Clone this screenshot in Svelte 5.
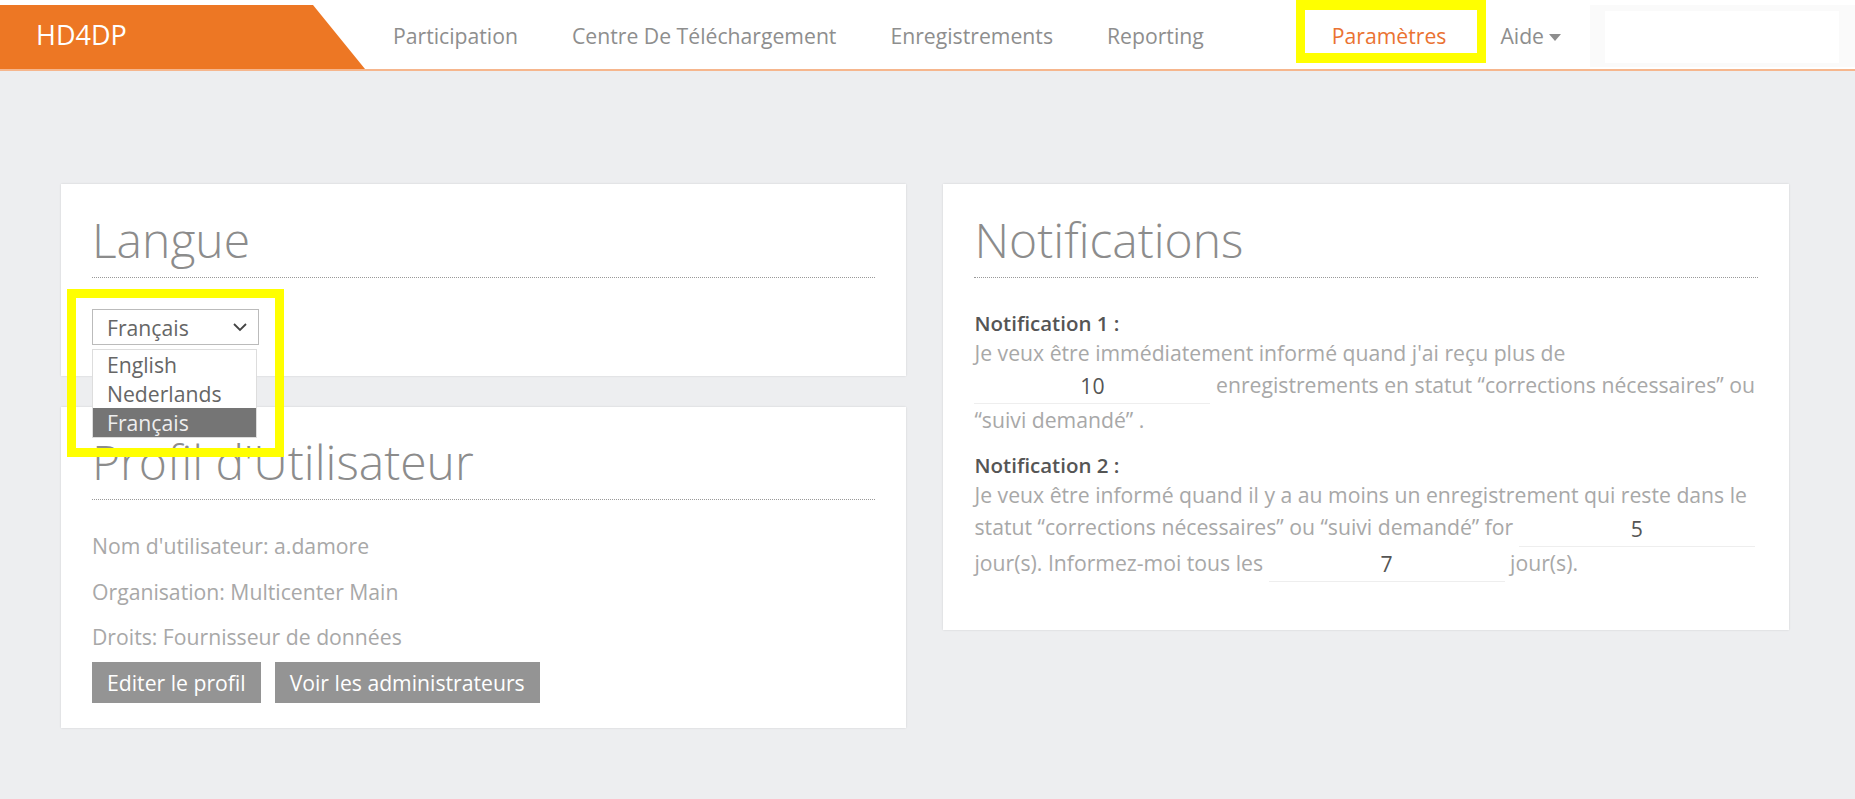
<script>
	const navLinks = ['Participation', 'Centre De Téléchargement', 'Enregistrements', 'Reporting'];
	const languages = ['English', 'Nederlands', 'Français'];
	const profile = [
		"Nom d'utilisateur: a.damore",
		'Organisation: Multicenter Main',
		'Droits: Fournisseur de données'
	];
</script>

<div class="page">
	<header class="topbar">
		<div class="logo">HD4DP</div>
		<nav class="nav">
			{#each navLinks as link}
				<a href="#top" class="nav-link">{link}</a>
			{/each}
			<a href="#top" class="nav-link active">Paramètres</a>
			<a href="#top" class="nav-link">Aide<span class="caret"></span></a>
		</nav>
		<div class="search-wrap"><div class="search"></div></div>
	</header>

	<main class="content">
		<div class="col">
			<section class="card lang-card">
				<h1>Langue</h1>
				<div class="select">
					<span>Français</span>
					<svg width="16" height="10" viewBox="0 0 16 10"><path d="M2 2l6 6 6-6" fill="none" stroke="#444" stroke-width="1.8" /></svg>
				</div>
				<div class="dropdown">
					{#each languages as lang}
						<div class="option" class:selected={lang === 'Français'}>{lang}</div>
					{/each}
				</div>
				<div class="highlight lang-highlight"></div>
			</section>

			<section class="card profile-card">
				<h1>Profil d'Utilisateur</h1>
				<div class="profile-rows">
					{#each profile as row}
						<p>{row}</p>
					{/each}
				</div>
				<div class="buttons">
					<button>Editer le profil</button>
					<button>Voir les administrateurs</button>
				</div>
			</section>
		</div>

		<section class="card notif-card">
			<h1>Notifications</h1>
			<div class="notif">
				<strong>Notification 1 :</strong>
				<p>
					Je veux être immédiatement informé quand j'ai reçu plus de
					<span class="field">10</span>
					enregistrements en statut “corrections nécessaires” ou “suivi demandé” .
				</p>
			</div>
			<div class="notif">
				<strong>Notification 2 :</strong>
				<p>
					Je veux être informé quand il y a au moins un enregistrement qui reste dans le statut “corrections nécessaires” ou “suivi demandé” for
					<span class="field">5</span>
					jour(s). Informez-moi tous les
					<span class="field">7</span>
					jour(s).
				</p>
			</div>
		</section>
	</main>

	<div class="highlight nav-highlight"></div>
</div>

<style>
	:global(body) {
		margin: 0;
		background: #edeef0;
		font-family: 'Open Sans', sans-serif;
	}
	.page {
		position: relative;
		height: 799px;
		overflow: hidden;
		background: #edeef0;
	}
	.topbar {
		display: flex;
		height: 69px;
		background: #fff;
		border-bottom: 2px solid #f6b68d;
	}
	.logo {
		flex: none;
		box-sizing: border-box;
		width: 365px;
		height: 64px;
		margin-top: 5px;
		padding-left: 36px;
		background: #ed7724;
		color: #fff;
		font-size: 27px;
		font-weight: 500;
		line-height: 60px;
		clip-path: polygon(0 0, 313px 0, 365px 100%, 0 100%);
	}
	.nav {
		display: flex;
		flex: none;
		align-items: center;
		width: 1225px;
		height: 70px;
	}
	.nav-link {
		padding: 0 27px;
		color: #8e8e8e;
		font-size: 21.2px;
		text-decoration: none;
		white-space: nowrap;
	}
	.nav-link:first-child {
		padding-left: 28px;
	}
	.nav-link.active {
		margin-left: 74px;
		color: #ea7232;
	}
	.caret {
		display: inline-block;
		margin-left: 5px;
		vertical-align: 3px;
		border-left: 6px solid transparent;
		border-right: 6px solid transparent;
		border-top: 7px solid #8e8e8e;
	}
	.search-wrap {
		flex: 1;
		box-sizing: border-box;
		height: 62px;
		margin-top: 5px;
		padding: 6px 16px 0 15px;
		background: #fafafa;
	}
	.search {
		height: 52px;
		background: #fff;
	}
	.content {
		display: flex;
		gap: 37px;
		align-items: flex-start;
		padding: 113px 66px 0 61px;
	}
	.col {
		display: flex;
		flex-direction: column;
		gap: 31px;
		width: 846px;
	}
	.card {
		position: relative;
		box-sizing: border-box;
		padding: 27px 31px 0;
		background: #fff;
		box-shadow: 0 0 2px rgba(0, 0, 0, 0.12);
	}
	h1 {
		margin: 0 0 31px;
		padding-bottom: 9px;
		border-bottom: 1px dotted #999;
		color: #8c8c8c;
		font-size: 48px;
		font-weight: 300;
		line-height: 57px;
	}
	.lang-card {
		z-index: 1;
		height: 192px;
	}
	.select {
		display: flex;
		align-items: center;
		justify-content: space-between;
		box-sizing: border-box;
		width: 167px;
		height: 36px;
		padding: 0 10px 0 14px;
		border: 1px solid #bbb;
		color: #666;
		font-size: 21.2px;
	}
	.dropdown {
		position: absolute;
		left: 31px;
		top: 165px;
		box-sizing: border-box;
		width: 165px;
		background: #fff;
		border: 1px solid #ddd;
		color: #666;
		font-size: 21.2px;
	}
	.option {
		height: 29px;
		padding-left: 14px;
		line-height: 29px;
	}
	.option.selected {
		background: #757575;
		color: #eee;
	}
	.highlight {
		position: absolute;
		box-sizing: border-box;
		border: 9px solid #ffff00;
		pointer-events: none;
	}
	.lang-highlight {
		left: 6px;
		top: 105px;
		width: 217px;
		height: 168px;
	}
	.nav-highlight {
		left: 1296px;
		top: 0;
		width: 190px;
		height: 63px;
		border-width: 10px 9px;
	}
	.profile-card {
		height: 321px;
		padding-top: 26px;
	}
	.profile-card h1 {
		margin-bottom: 32px;
	}
	.profile-rows p {
		height: 45.5px;
		margin: 0;
		color: #a8a8a8;
		font-size: 21.2px;
		line-height: 27px;
	}
	.buttons {
		display: flex;
		gap: 14px;
		margin-top: -7px;
	}
	button {
		height: 41px;
		padding: 0 15px;
		border: none;
		background: #949494;
		color: #fff;
		font-family: inherit;
		font-size: 21.2px;
	}
	.notif-card {
		width: 846px;
		height: 446px;
	}
	.notif {
		margin-bottom: 15px;
	}
	.notif strong {
		display: block;
		color: #555;
		font-size: 20.5px;
		font-weight: 600;
		line-height: 28px;
	}
	.notif p {
		margin: 0;
		color: #a8a8a8;
		font-size: 21.2px;
		line-height: 32px;
	}
	.field {
		display: inline-block;
		box-sizing: border-box;
		width: 236px;
		height: 34px;
		border-bottom: 1px solid #eee;
		color: #555;
		text-align: center;
		vertical-align: middle;
	}
</style>
